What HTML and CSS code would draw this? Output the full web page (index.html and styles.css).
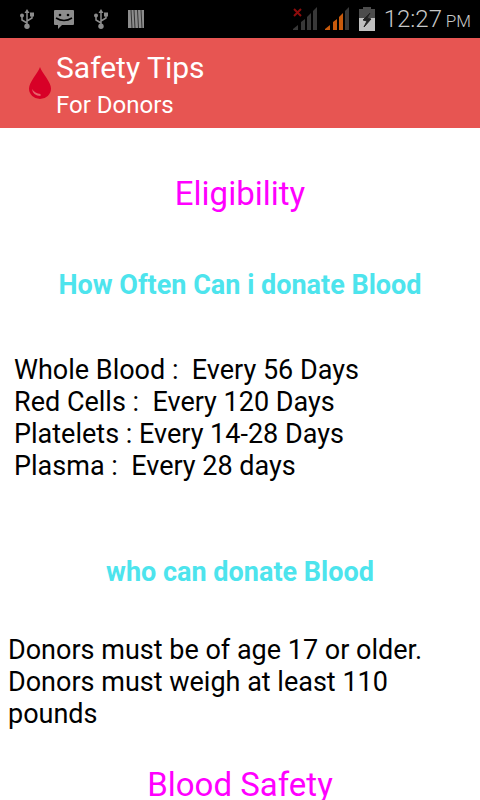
FILE: index.html
```html
<!DOCTYPE html>
<html lang="en">
<head>
  <meta charset="UTF-8" />
  <meta name="viewport" content="width=device-width, initial-scale=1.0"/>
  <title>Safety Tips</title>
  <link rel="stylesheet" href="styles.css">
</head>
<body>

  <!-- Phone status bar -->
  <div class="status-bar">
    <div class="notifications">
      <svg width="14" height="20" viewBox="0 0 14 20" aria-hidden="true">
        <path d="M7 3v13M7 14L2 11V6M7 12l5-3V5" fill="none" stroke="#8c8c8c" stroke-width="1.5"/>
        <path d="M7 0l2.5 4h-5z" fill="#8c8c8c"/>
        <circle cx="7" cy="17.3" r="2.7" fill="#8c8c8c"/>
        <circle cx="2" cy="6.5" r="2" fill="#8c8c8c"/>
        <path d="M10 3.500h4v4h-4z" fill="#8c8c8c"/>
      </svg>
      <svg width="20" height="20" viewBox="0 0 20 20" aria-hidden="true">
        <path d="M1 1h18q1 0 1 1v13q0 1-1 1H8l-4 4v-4H1q-1 0-1-1V2q0-1 1-1z" fill="#8c8c8c"/>
        <path d="M2 9q8 5 16 0" fill="none" stroke="#000" stroke-width="1.5"/>
        <circle cx="6" cy="6" r="1.3"/>
        <circle cx="14" cy="6" r="1.3"/>
      </svg>
      <svg width="14" height="20" viewBox="0 0 14 20" aria-hidden="true">
        <path d="M7 3v13M7 14L2 11V6M7 12l5-3V5" fill="none" stroke="#8c8c8c" stroke-width="1.5"/>
        <path d="M7 0l2.5 4h-5z" fill="#8c8c8c"/>
        <circle cx="7" cy="17.3" r="2.7" fill="#8c8c8c"/>
        <circle cx="2" cy="6.5" r="2" fill="#8c8c8c"/>
        <path d="M10 3.500h4v4h-4z" fill="#8c8c8c"/>
      </svg>
      <svg width="16" height="20" viewBox="0 0 16 20" aria-hidden="true">
        <path d="M0 1h16v18H0z" fill="#8c8c8c"/>
        <path d="M3 1l1 18M6 1l1 18M9.500 1l1 18M13 1l1 18" stroke="#333" stroke-width="1"/>
      </svg>
    </div>
    <div class="system">
      <svg class="signal" width="24" height="24" viewBox="0 0 24 24" aria-hidden="true">
        <path d="M0 23v-1l5-4v5zM8 23v-8l4-3v11zM14 23V10l4-4v17zM20 23V4l4-4v23z" fill="#383838"/>
        <path d="M1 2l7 7M8 2L1 9" stroke="#8e0c0c" stroke-width="2"/>
      </svg>
      <svg class="signal" width="24" height="24" viewBox="0 0 24 24" aria-hidden="true">
        <path d="M0 23v-1l5-4v5zM8 23v-8l4-3v11zM14 23V10l4-4v17z" fill="#c85a0c"/>
        <path d="M20 23V4l4-4v23z" fill="#383838"/>
      </svg>
      <svg class="battery" width="16" height="24" viewBox="0 0 16 24" aria-hidden="true">
        <path d="M4 0h8v2h4v9H0V2h4z" fill="#4c4c4c"/>
        <path d="M0 11h16v13H0z" fill="#c0c0c0"/>
        <path d="M11 6L4 13l4 1-3 6 7-8-4-1z" fill="#222" stroke="#222"/>
      </svg>
      <span class="clock">12:27 <small>PM</small></span>
    </div>
  </div>

  <header>
    <svg class="drop" width="22" height="32" viewBox="0 0 22 32" aria-hidden="true">
      <path d="M11 0C9 6 0 15 0 21.5a11 10.5 0 0 0 22 0C22 15 13 6 11 0z" fill="#d80027"/>
      <path d="M3 22q1 7 8.5 7v-2Q6 26.5 3 22z" fill="#e5656b"/>
    </svg>
    <div>
      <h1>Safety Tips</h1>
      <p>For Donors</p>
    </div>
  </header>

  <main>
    <!-- Eligibility Section -->
    <h2>Eligibility</h2>
    <h3>How Often Can i donate Blood</h3>
    <p class="intervals">Whole Blood :  Every 56 Days
Red Cells :  Every 120 Days
Platelets : Every 14-28 Days
Plasma :  Every 28 days</p>

    <h3>who can donate Blood</h3>
    <p class="rules">Donors must be of age 17 or older. Donors must weigh at least 110 pounds</p>

    <!-- Blood Safety Section -->
    <h2>Blood Safety</h2>
  </main>

</body>
</html>
```
FILE: styles.css
```css
body {
  margin: 0;
  height: 100vh;
  display: flex;
  flex-direction: column;
  font-family: Roboto, sans-serif;
  background-color: #fff;
  color: #000;
}
h1, h2, h3, p {
  margin: 0;
  font-weight: 400;
}
.status-bar {
  flex: none;
  display: flex;
  justify-content: space-between;
  align-items: center;
  height: 38px;
  padding: 0 9px 0 20px;
  background: #000;
}
.notifications, .system {
  display: flex;
  align-items: center;
}
.notifications {
  gap: 20px;
}
.signal {
  margin-right: 8px;
}
.battery {
  margin: 0 9px 0 2px;
}
.clock {
  padding-top: 3px;
  color: #c8c8c8;
  font-size: 24px;
  font-weight: 300;
  line-height: 35px;
}
.clock small {
  font-size: 17px;
  margin-left: -2px;
}
header {
  flex: none;
  display: flex;
  align-items: center;
  gap: 5px;
  padding: 12px 29px 9px;
  background: #e75552;
  color: #fff;
}
.drop {
  flex: none;
  margin-bottom: 3px;
}
h1 {
  font-size: 30px;
  line-height: 35px;
  margin-bottom: 6px;
}
header p {
  font-size: 24px;
  line-height: 28px;
}
main {
  flex: 1;
  min-height: 0;
  overflow-y: auto;
  scrollbar-width: none;
  padding: 46px 8px 0;
  font-size: 27px;
  line-height: 32px;
}
h2 {
  color: #ff00ff;
  font-size: 33px;
  line-height: 39px;
  text-align: center;
}
h3 {
  color: #4de4ed;
  font-size: 27px;
  font-weight: 700;
  text-align: center;
  margin: 56px 0 53px;
}
.intervals {
  padding-left: 6px;
  white-space: pre-wrap;
}
.intervals + h3 {
  margin: 74px 0 46px;
}
.rules {
  margin-bottom: 35px;
}
```
